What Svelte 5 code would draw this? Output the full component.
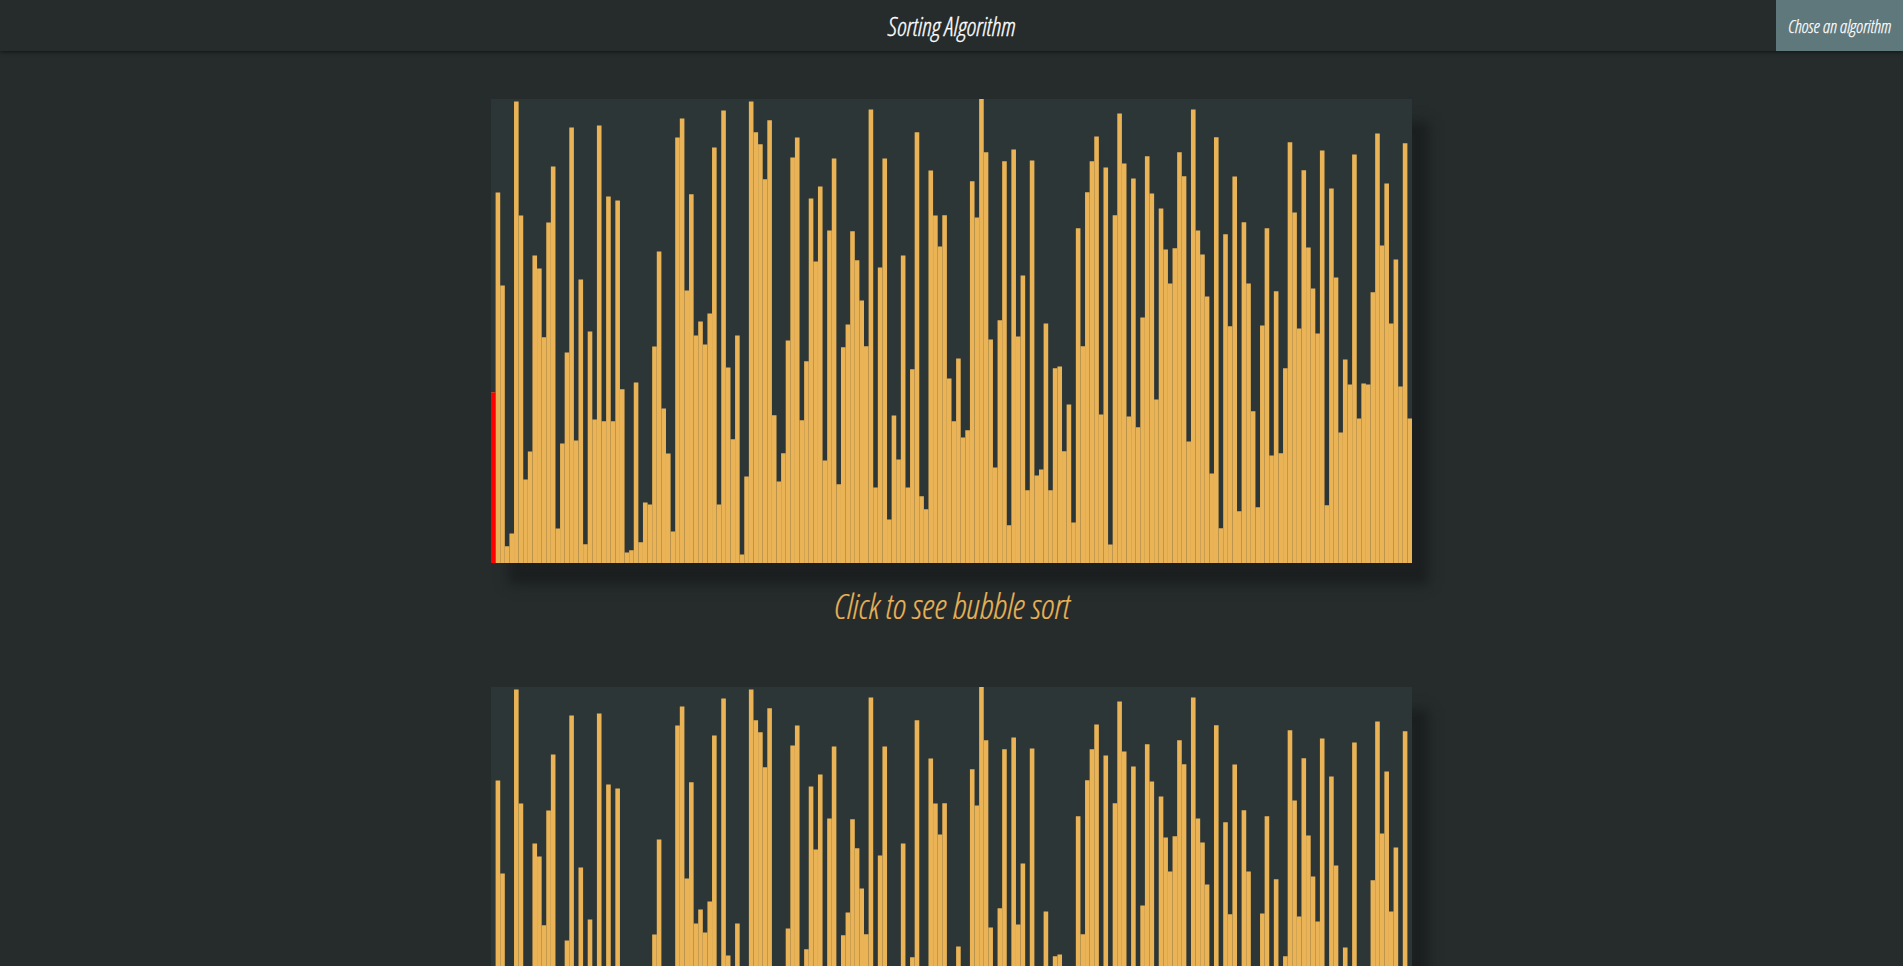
<script>
  const WIDTH = 921;
  const HEIGHT = 464;
  const STEP = WIDTH / 200;

  // Distance of each bar's top from the chart's upper edge, in thirds of a pixel, offset by 27.
  const samples = [
    907, 307, 587, 1368, 1330, 34, 376, 1168, 1084, 496, 535, 741, 397, 229, 1315, 1060, 787, 113, 1051, 568,
    1362, 725, 988, 106, 993, 319, 993, 331, 897, 1387, 1380, 877, 1356, 1238, 1244, 770, 485, 956, 1090, 1324,
    142, 85, 601, 312, 736, 695, 763, 670, 173, 1243, 61, 832, 1047, 737, 1393, 1159, 35, 126, 162, 267,
    90, 975, 1174, 1089, 751, 202, 142, 990, 813, 325, 514, 290, 1111, 421, 205, 1182, 771, 703, 423, 510,
    631, 768, 58, 1192, 532, 205, 1289, 977, 1108, 497, 1192, 837, 126, 1218, 1257, 241, 376, 470, 375, 866,
    993, 806, 1043, 1020, 273, 382, 25, 186, 748, 1133, 690, 213, 1305, 179, 739, 556, 1200, 211, 1157, 1138,
    701, 1200, 834, 829, 1083, 943, 1297, 414, 768, 306, 213, 140, 974, 232, 1363, 375, 70, 221, 979, 265,
    1011, 682, 198, 310, 928, 355, 479, 580, 474, 186, 258, 1055, 58, 422, 494, 620, 1151, 141, 1314, 432,
    708, 259, 1263, 396, 580, 963, 1251, 706, 414, 1096, 603, 1089, 834, 156, 367, 715, 240, 473, 595, 730,
    181, 1245, 295, 563, 1028, 808, 883, 193, 986, 881, 884, 606, 130, 466, 280, 700, 508, 889, 159, 985
  ];
  const bars = samples.map((s, i) => {
    const y = Math.max(0, Math.floor((s - 27) / 3) + (s % 3 ? 0.5 : 0.25));
    return { x: i * STEP, y, h: HEIGHT - y };
  });

  const charts = [{ name: 'bubble', label: 'Click to see bubble sort', active: 0 }, { name: 'selection' }];
</script>

<header>
  <h1>Sorting Algorithm</h1>
  <button class="menu">Chose an algorithm</button>
</header>

<main>
  {#each charts as chart (chart.name)}
    <section>
      <svg class="chart" width={WIDTH} height={HEIGHT} viewBox="0 0 {WIDTH} {HEIGHT}">
        {#each bars as bar}
          <rect x={bar.x} y={bar.y} width={STEP} height={bar.h} />
        {/each}
        {#if chart.active !== undefined}
          {@const bar = bars[chart.active]}
          <rect class="active" x={bar.x} y={bar.y} width={STEP} height={bar.h} />
        {/if}
      </svg>
      {#if chart.label}<p>{chart.label}</p>{/if}
    </section>
  {/each}
</main>

<style>
  :global(body) {
    background: #262c2c;
    overflow: hidden;
    font-family: 'Open Sans', sans-serif;
    font-stretch: 75%;
    font-weight: 300;
    font-style: italic;
  }
  :global(#app) {
    height: 966px;
    overflow: hidden;
  }
  header {
    display: grid;
    grid-template-columns: 1fr auto 1fr;
    height: 51px;
    align-items: center;
    box-shadow: 0 1px 4px rgba(0, 0, 0, 0.6);
  }
  h1 {
    grid-column: 2;
    margin: 0;
    padding: 2px 0 0 1px;
    font-size: 25.2px;
    font-weight: 300;
    line-height: 33px;
    color: #fff;
    -webkit-text-stroke: 0.3px #fff;
  }
  .menu {
    justify-self: end;
    width: 127px;
    height: 51px;
    padding: 0 0 0 1px;
    border: 0;
    background: #5f787c;
    color: #fff;
    font: inherit;
    font-size: 18px;
    white-space: nowrap;
    -webkit-text-stroke: 0.25px #fff;
  }
  main {
    display: flex;
    flex-direction: column;
    align-items: center;
    padding-top: 48px;
  }
  section {
    display: flex;
    flex-direction: column;
    align-items: center;
    height: 588px;
    flex: none;
  }
  .chart {
    display: block;
    background: #2d3636;
    box-shadow: 17px 22px 11px #1b1f1f;
  }
  rect {
    fill: #e9b356;
  }
  rect.active {
    fill: #f00;
  }
  p {
    margin: 18px 0 0;
    padding-left: 2px;
    font-size: 35.2px;
    line-height: 48px;
    color: #e9b356;
    -webkit-text-stroke: 0.2px #e9b356;
  }
</style>
